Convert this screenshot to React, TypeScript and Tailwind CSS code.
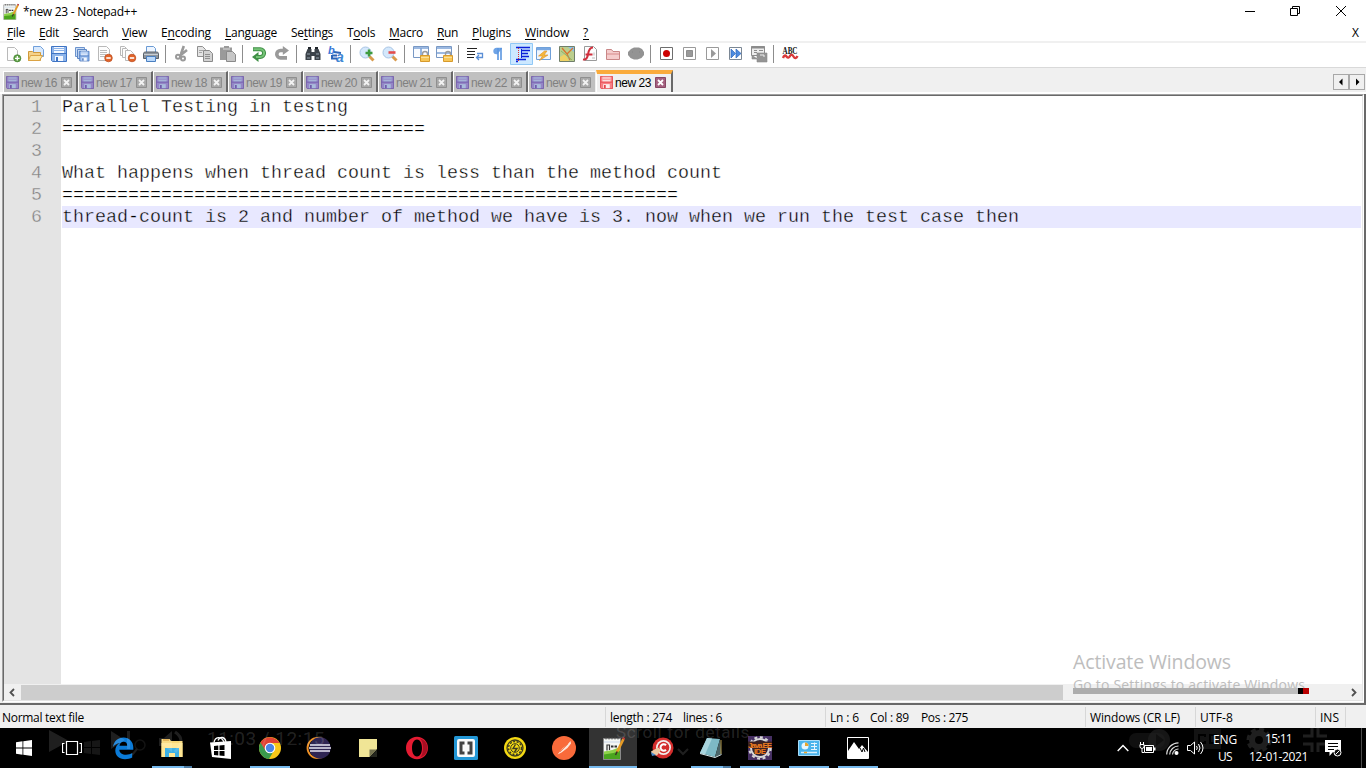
import { useLayoutEffect, useRef, type ReactNode } from "react";

const UI = "font-['Open_Sans','Noto_Sans',sans-serif]";

/* Text whose tracking is adjusted so that it fills a given width. */
function Fit({ w, className = "", children }: { w: number; className?: string; children: ReactNode }) {
  const ref = useRef<HTMLSpanElement>(null);
  useLayoutEffect(() => {
    const el = ref.current;
    if (!el) return;
    el.style.letterSpacing = "0px";
    const n = (el.textContent || "").length;
    const natural = el.getBoundingClientRect().width;
    el.style.letterSpacing = `${(w - natural) / n}px`;
  }, [w]);
  return (
    <span ref={ref} className={`inline-block whitespace-pre ${className}`}>
      {children}
    </span>
  );
}

/* ---------- toolbar icons ---------- */
function Ic({ children }: { children: ReactNode }) {
  return (
    <svg width="16" height="16" viewBox="0 0 16 16" className="mr-[7px] block shrink-0 overflow-visible">
      {children}
    </svg>
  );
}
const Sep = () => <div className="-ml-px mr-2 h-[18px] w-px shrink-0 bg-[#8d8d8d]" />;

const Page = ({ x = 0, y = 0, w = 10, h = 12, s = "#b9b9b9", f = "#fdfdfd" }) => (
  <path d={`M${x + 0.5} ${y + 0.5}h${w - 3}l3 3v${h - 3}h${-w}z`} fill={f} stroke={s} />
);
const Floppy = ({ c = "#3f74c4", l = "#8db4ea", p = "#f4f8ff" }) => (
  <g>
    <path d="M.5.5h15v15H1.5l-1-1z" fill={l} stroke={c} />
    <path d="M3 1h10v6H3z" fill={p} />
    <path d="M3 2.5h10M3 4.5h10" stroke={l} />
    <path d="M1 7.5h14" stroke={c} />
    <path d="M4 10h8v5H4z" fill={p} />
    <path d="M5 11h2v4H5z" fill={c} />
  </g>
);
const Minus = ({ x = 8, y = 8 }) => (
  <g>
    <circle cx={x + 4} cy={y + 4} r="3.8" fill="#e2642a" stroke="#b8481a" strokeWidth=".7" />
    <path d={`M${x + 1.8} ${y + 4}h4.4`} stroke="#fff" strokeWidth="1.6" />
  </g>
);
const Lock = () => (
  <g>
    <path d="M9.5 10V8a2.5 2.5 0 015 0v2" fill="none" stroke="#9b9b9b" strokeWidth="1.4" />
    <path d="M7.5 9.5h9v6h-9z" fill="#f7c657" stroke="#d79a2c" />
    <path d="M8 11.5h8" stroke="#fbe09a" />
  </g>
);

function Toolbar() {
  return (
    <div className="flex h-[24px] items-center pb-[2px] pl-[5px]">
      <Ic><Page x={2} y={1} w={10} h={13} /><circle cx="12.3" cy="12.3" r="3.6" fill="#5d9f43" stroke="#3b7a2a" strokeWidth=".6" /><path d="M10 12.3h4.6M12.3 10v4.6" stroke="#fff" strokeWidth="1.3" /></Ic>
      <Ic><path d="M5.500.500h7l3 3v7h-10z" fill="#d9e9fc" stroke="#6f9fdb" /><path d="M.5 14.5v-9h4l1 1h7v8z" fill="#f5d28a" stroke="#d09a3a" /><path d="M.5 14.5l2-5h12l-3 5z" fill="#fbe6a8" stroke="#dba344" /></Ic>
      <Ic><Floppy /></Ic>
      <Ic><path d="M1.5 1.5h9v9h-9z" fill="#c9dcf5" stroke="#6c93cd" /><path d="M3.5 3.5h9v9h-9z" fill="#c9dcf5" stroke="#5e88c6" /><g transform="translate(5 5) scale(.65)"><Floppy c="#3b69b4" /></g></Ic>
      <Ic><Page x={1} y={0} w={11} h={14} /><path d="M3 4.5h7M3 6.5h7M3 8.5h6M3 10.5h5" stroke="#bcbcbc" /><Minus x={7.5} /></Ic>
      <Ic><Page x={0} y={0} w={7} h={9} /><Page x={2} y={2} w={7} h={9} /><Page x={5} y={4} w={8} h={10} /><Minus /></Ic>
      <Ic><path d="M3.5 7V.5h7l2 2V7" fill="#edf5ff" stroke="#6b9bd4" /><path d="M.5 7.5c0-1 1-1.5 2-1.5h11c1 0 2 .5 2 1.5v5H.5z" fill="#8e959d" stroke="#59616a" /><path d="M1 8.5h14" stroke="#c8ced4" /><path d="M3.5 10.5h9v5h-9z" fill="#b9d8fb" stroke="#4a7fc0" /></Ic>
      <Sep />
      <Ic><path d="M9.8 0L7 8M13 4L5.500 10" stroke="#9a9a9a" strokeWidth="2.600" /><circle cx="4" cy="10.800" r="2" fill="none" stroke="#9a9a9a" strokeWidth="2" /><circle cx="9" cy="12.600" r="2" fill="none" stroke="#9a9a9a" strokeWidth="2" /></Ic>
      <Ic><Page x={0} y={0} w={8} h={10} s="#8f8f8f" f="#e4e4e4" /><path d="M2 4.5h4M2 6.5h3" stroke="#a5a5a5" /><Page x={6} y={4} w={9} h={11} s="#8a8a8a" f="#d2d2d2" /><path d="M8 8.5h5M8 10.5h5M8 12.5h5" stroke="#8f8f8f" /></Ic>
      <Ic><path d="M0 1.5h4V0h5v1.5h3V14H0z" fill="#9a9a9a" /><path d="M3 3h7" stroke="#dcdcdc" /><Page x={6} y={5} w={9} h={10} s="#8a8a8a" f="#c6c6c6" /></Ic>
      <Sep />
      <Ic><path d="M2 3.2h7.2a3.6 3.6 0 010 7.8H6" fill="none" stroke="#3f8f45" strokeWidth="4" /><path d="M7.5 6v10L1 11z" fill="#3f8f45" /><path d="M2.5 3.2h6.7a3.6 3.6 0 010 7.8H5" fill="none" stroke="#74c276" strokeWidth="2" /></Ic>
      <Ic><path d="M10 4.500H6.500a3.600 3.600 0 000 7.400H13" fill="none" stroke="#9a9a9a" strokeWidth="3.600" /><path d="M8.800 0v9L15 4.500z" fill="#9a9a9a" /></Ic>
      <Sep />
      <Ic><path d="M2.500 3h4v3h3V3h4l2 5v6h-6v-4h-3v4h-6V8z" fill="#3b4249" /><path d="M3 2h3M10 2h3" stroke="#20252a" strokeWidth="2" /><path d="M2 8h3M11 8h3M2 12h3M11 12h3" stroke="#98a4af" strokeWidth="1.200" /></Ic>
      <Ic><text x="0" y="8" className="font-['Liberation_Sans',sans-serif] text-[11px] font-bold italic" fill="#3a78d8">b</text><text x="8" y="16" className="font-['Liberation_Sans',sans-serif] text-[14px] font-bold italic" fill="#3f87d4">a</text><path d="M6 6l7 1M4 9.500h5M4 9v3.500h5" fill="none" stroke="#2d66b8" strokeWidth="2" /></Ic>
      <Sep />
      <Ic><path d="M9 9l5.500 5.500" stroke="#d99b4d" strokeWidth="3" /><circle cx="6.500" cy="6.500" r="5.500" fill="#d4e8fc" stroke="#a8c4e4" /><path d="M6.500 7h7M10 3.500v7" stroke="#3e9b3e" strokeWidth="2.400" /></Ic>
      <Ic><path d="M9 9l5.500 5.500" stroke="#d99b4d" strokeWidth="3" /><circle cx="6.500" cy="6.500" r="5.500" fill="#d4e8fc" stroke="#a8c4e4" /><path d="M6.500 6.500h7" stroke="#e34d4d" strokeWidth="2.600" /></Ic>
      <Sep />
      <Ic><path d="M.5.5h15v11H.5z" fill="#fafcff" stroke="#7898c4" /><path d="M1 2h14M8 2v9" stroke="#7ea3d8" strokeWidth="1.6" /><Lock /></Ic>
      <Ic><path d="M.5.5h15v11H.5z" fill="#fafcff" stroke="#7898c4" /><path d="M1 2h14M1 7h14" stroke="#7ea3d8" strokeWidth="1.6" /><Lock /></Ic>
      <Sep />
      <Ic><path d="M0 2.500h10M0 5.500h8M0 8.500h8M0 11.500h7" stroke="#222" /><path d="M10 7.500h5.500v4H10M12 9l-2.500 2.500L12 14" fill="none" stroke="#5b8fd6" strokeWidth="1.300" /></Ic>
      <Ic><path d="M12 2.500H6.500a2.500 2.500 0 000 5H8" fill="#6ea3e6" stroke="#6ea3e6" strokeWidth="1.400" /><path d="M8 2v12M11 2v12" stroke="#5b96e0" strokeWidth="1.600" /></Ic>
      <svg width="23" height="22" viewBox="0 0 23 22" className="-ml-[3px] mr-[4px] block shrink-0">
        <path d="M.5.5h22v21H.5z" fill="#cce8ff" stroke="#90c8f6" />
        <path d="M6 4.500h14M12 7.500h8M12 10.500h6M12 13.500h7M6 16.500h10M6 18.500h2" stroke="#0b1fd8" strokeWidth="1.300" />
        <path d="M11.500 6v9" stroke="#0b1fd8" />
        <path d="M8.500 5v13" stroke="#e03030" strokeDasharray="1 1" />
      </svg>
      <div className="-ml-px flex items-center">
        <Ic><path d="M.5 1.500h14v12H.5z" fill="#eef5fe" stroke="#6f9fd8" /><path d="M1 3h13" stroke="#79a8e2" strokeWidth="2.400" /><path d="M8.500 5L2.500 10h4l-3 4.500L12 9H8l3-4z" fill="#f6b73c" stroke="#d8902a" strokeWidth=".6" /></Ic>
        <Ic><path d="M.5.500h15v15H.500z" fill="#bccf8e" stroke="#6f7f6a" /><path d="M1 11l5-3 4 7H1z" fill="#f0d264" /><path d="M9 1h6v5z" fill="#8ec0e8" /><path d="M3 2l5 6 6-6M8 8l3 6" fill="none" stroke="#d9742d" strokeWidth="1.300" /><path d="M2 5l5 4 6 5" fill="none" stroke="#8fb56a" /></Ic>
        <Ic><Page x={2} y={0} w={12} h={14} s="#9a9a9a" /><path d="M11 1.500c-4 0-4.500 4-5 7s-2 5.500-5 5M3.500 8.500h7" fill="none" stroke="#d02f3c" strokeWidth="2" /><path d="M12 6.500v3M10 12h3" stroke="#bbb" /></Ic>
        <Ic><path d="M1.500 13.500v-10h5l1.500 2h6.500v8z" fill="#f5cccc" stroke="#c98686" /><path d="M2 8h12" stroke="#e3a3a3" strokeWidth="1.600" /></Ic>
        <Ic><path d="M3 3l3-1.500h5L14 3l2 3v3l-2.500 3-4 1.500H6L2.500 12 0 9V6z" fill="#939393" /><path d="M4 6h1M11 6h1" stroke="#858585" /></Ic>
        <Sep />
        <Ic><path d="M1.500 1.500h12v12h-12z" fill="#fff" stroke="#6e6e6e" /><circle cx="7.500" cy="7.500" r="3.500" fill="#cc0000" /></Ic>
        <Ic><path d="M1.500 1.500h12v12h-12z" fill="#fff" stroke="#9a9a9a" /><path d="M4.500 4.500h6v6h-6z" fill="#999" stroke="#8d8d8d" /></Ic>
        <Ic><path d="M1.500 1.500h12v12h-12z" fill="#fff" stroke="#9a9a9a" /><path d="M6 3l5 4.500L6 12z" fill="#9a9a9a" /></Ic>
        <Ic><path d="M1.500 1.500h12v12h-12z" fill="#fff" stroke="#7b8794" /><path d="M3 3l4.500 4.500L3 12zM8 3l5 4.500L8 12z" fill="#4c8be0" stroke="#2f66b8" strokeWidth=".7" /></Ic>
        <Ic><path d="M.500.500h13v9H.500z" fill="#ededed" stroke="#8c8c8c" /><path d="M0 1.500h14" stroke="#8c8c8c" strokeWidth="2" /><path d="M3 4.500h3M8 4.500h4M3 6.500h3M3 9.500h4" stroke="#8c8c8c" /><path d="M1 9v4h6M6 7h10v9H6z" fill="#949494" stroke="#8c8c8c" strokeWidth=".6" /><path d="M9 9h4v2" stroke="#eee" fill="none" /></Ic>
        <Sep />
        <Ic><text x=".5" y="7.500" textLength="15" lengthAdjust="spacingAndGlyphs" className="font-['Liberation_Serif',serif] text-[9.5px] font-bold" fill="#111">ABC</text><path d="M1 12q1.500-4 3.500-1.500t3.500-.500 3.500.500 4-.500" fill="none" stroke="#d93a3a" strokeWidth="2.400" /></Ic>
      </div>
    </div>
  );
}

/* ---------- tabs ---------- */
function Tab({ label, active = false, narrow = false }: { label: string; active?: boolean; narrow?: boolean }) {
  return (
    <div
      className={`flex shrink-0 ${
        active
          ? "ml-px mt-px h-[23px] w-[77px] border-t-4 border-r-2 border-l border-t-[#faab3c] border-r-[#696969] border-l-white bg-[#f0f0f0] pl-[3px] pt-[2px]"
          : `mt-[2px] h-[21px] border-t border-l border-white bg-[#c0c0c0] pl-[2px] pt-[4px] ${narrow ? "w-[67px]" : "w-[75px] border-r-2 border-r-[#696969]"}`
      }`}
    >
      <svg width="13" height="13" viewBox="0 0 16 16" className="mr-[2px] block shrink-0">
        <Floppy c={active ? "#e23b43" : "#6d55a8"} l={active ? "#f77f84" : "#9486c6"} p={active ? "#fdeeee" : "#a9bcdc"} />
      </svg>
      <Fit w={narrow ? 30 : 36} className={`font-['Liberation_Sans',sans-serif] text-[12px] leading-[14px] ${active ? "text-black" : "text-[#808080]"}`}>
        {label}
      </Fit>
      <svg width="11" height="11" viewBox="0 0 11 11" className="ml-[4px] mt-px block shrink-0">
        <path d="M.5.5h10v10H.5z" fill={active ? "#a4607f" : "#a9a9a9"} stroke={active ? "#874764" : "#8f8f8f"} />
        <path d="M3 3l5 5M8 3L3 8" stroke={active ? "#fff" : "#f2f2f2"} strokeWidth="1.800" />
      </svg>
    </div>
  );
}

const NppIcon = ({ size }: { size: number }) => (
  <svg width={size} height={size} viewBox="0 0 24 24" className="block">
    <path d="M2.500 2.500h17v21h-17z" fill="#f5f7f4" stroke="#8a8a8a" />
    <path d="M3 5h16v2H3z" fill="#dfe6ee" />
    <path d="M3 15.500q8-.500 16-4.500v12H3z" fill="#8ed24a" />
    <path d="M3 18.500q8-.500 16-3.500v8H3z" fill="#4aa51e" />
    <path d="M5 1.500v2M8 1.500v2M11 1.500v2M14 1.500v2M17 1.500v2" stroke="#555" />
    <path d="M6 8.500v6M6 9h2.500v5" stroke="#333" fill="none" strokeWidth="1.200" />
    <path d="M10 10.500h2.500M13.500 10.500H16" stroke="#333" strokeWidth="1.800" />
    <path d="M22.500 3L16 16" stroke="#e59a25" strokeWidth="2.600" />
    <path d="M23.200 1.500l-.8 1.700" stroke="#b8383d" strokeWidth="2.600" />
    <path d="M16.200 15.500L14.500 19" stroke="#3b3024" strokeWidth="1.500" />
  </svg>
);

const menus: [string, string, string, number][] = [
  ["", "F", "ile", 18], ["", "E", "dit", 20], ["", "S", "earch", 35], ["", "V", "iew", 25],
  ["E", "n", "coding", 50], ["", "L", "anguage", 52], ["Se", "t", "tings", 42], ["T", "o", "ols", 28],
  ["", "M", "acro", 34], ["", "R", "un", 21], ["", "P", "lugins", 39], ["", "W", "indow", 44], ["", "?", "", 6],
];

const lines = [
  "Parallel Testing in testng",
  "=================================",
  "",
  "What happens when thread count is less than the method count",
  "========================================================",
  "thread-count is 2 and number of method we have is 3. now when we run the test case then",
];

/* ---------- taskbar ---------- */
function Slot({ children, run = 0, active = false }: { children: ReactNode; run?: number; active?: boolean }) {
  return (
    <div className={`mr-px flex h-[40px] w-[48px] shrink-0 flex-col items-center ${active ? "bg-[#333333]" : ""}`}>
      <div className="flex h-[38px] items-center pt-[2px]">{children}</div>
      {active && <div className="h-[2px] w-[48px] bg-[#76b9ed]" />}
      {run > 0 && (
        <div className="flex h-[2px] w-[40px]">
          <div className="flex-1 bg-[#76b9ed]" />
          {run > 1 && <div className="w-[8px] bg-[#4c7ba3]" />}
        </div>
      )}
    </div>
  );
}
const Big = ({ children }: { children: ReactNode }) => (
  <svg width="24" height="24" viewBox="0 0 24 24" className="block overflow-visible">{children}</svg>
);

function Taskbar() {
  return (
    <div className="relative flex h-[40px] bg-black">
      <div className="flex w-[48px] items-center justify-center">
        <svg width="16" height="16" viewBox="0 0 16 16"><path d="M0 2.200L6.500 1.300V7.600H0zM7.300 1.200L16 0v7.600H7.300zM0 8.400h6.500v6.300L0 13.800zM7.300 8.400H16V16l-8.700-1.200z" fill="#fff" /></svg>
      </div>
      <div className="mr-[3px] flex w-[48px] items-center justify-center">
        <svg width="20" height="14" viewBox="0 0 20 14"><path d="M4.500.5h11v13h-11zM2.500 2.500h-2v9h2M17.500 2.500h2v9h-2" fill="none" stroke="#fff" strokeWidth="1.200" /></svg>
      </div>
      <Slot><Big><path fillRule="evenodd" d="M2 11C3 5 7 1.500 12.500 1.500c6 0 9.800 4.500 9.800 10v2.300H8.300c.3 3.200 3 5 6.700 5 2.500 0 4.500-.7 6.200-1.700v4.400c-2 1.100-4.400 1.700-7.200 1.700-6 0-9.700-3.500-9.700-8.700 0-3.300 1.700-6 4.700-7.500C5.500 7.500 3.500 9 2 11zM8.500 9.800h7.700c0-2.600-1.200-4-3.600-4-2.200 0-3.700 1.500-4.100 4z" fill="#0b7bd8" /></Big></Slot>
      <Slot run={2}><Big><path d="M1.500 3h8l1.500 2h11.500v16h-21z" fill="#f8d775" /><path d="M1.500 7h21v14h-21z" fill="#ffe694" /><path d="M3 4h6" stroke="#d79b32" strokeWidth="1.500" /><path d="M5 12h14v9h-4v-4H9v4H5z" fill="#3db1e6" /></Big></Slot>
      <Slot><Big><path d="M1 7.500L22 6v18L3 22z" transform="translate(0 -1)" fill="#fff" /><path d="M5 6.500c1-6 7-7 10-.5M9 4.500c2-4.500 7-4 8 1.500" fill="none" stroke="#fff" strokeWidth="1.300" /><path d="M5 10l4.300-.4v4.400H5zM10.500 9.500l5-.5v5h-5zM5 15h4.300v4.400L5 19zM10.500 15h5v5l-5-.5z" fill="#000" /></Big></Slot>
      <Slot run={1}><Big><circle cx="12" cy="12" r="11" fill="#f8c719" /><path d="M2.500 6.500A11 11 0 0011 23l5-8.500-4-2.500z" fill="#3a9a4c" /><path d="M2.500 6.500l5 8 5-7.500h9A11 11 0 002.500 6.500z" fill="#df4134" /><circle cx="12" cy="12" r="5.300" fill="#fff" /><circle cx="12" cy="12" r="4.200" fill="#4a85e8" /></Big></Slot>
      <Slot><Big><circle cx="10.500" cy="12" r="10" fill="none" stroke="#f09226" strokeWidth="1.800" /><circle cx="13" cy="12" r="10.700" fill="#2f2553" /><path d="M3 9h20M2 12h22M3 15h20" stroke="#e9e6f4" strokeWidth="1.500" /></Big></Slot>
      <Slot><Big><path d="M3 3h18v10l-7.500 8H3z" fill="#f0e596" /><path d="M13.500 13.500H21L13.500 21z" fill="#757350" /><path d="M21 14v7h-7z" fill="#24261e" /></Big></Slot>
      <Slot><Big><path fillRule="evenodd" d="M12 .8c6.300 0 11 5 11 11.200s-4.700 11.200-11 11.200S1 18.200 1 12 5.700.8 12 .8zM12 3.500C8.500 3.500 7 8 7 12s1.500 8.500 5 8.500 5-4.500 5-8.500-1.500-8.500-5-8.500z" fill="#e51b32" /><path d="M15 2.500c10 3 10 16 0 19 4-4 4-15 0-19z" fill="#a70e22" /></Big></Slot>
      <Slot><Big><rect width="24" height="24" rx="1.500" fill="#2397d6" /><rect x="3" y="3" width="18" height="18" rx="2" fill="#fafafa" /><path d="M10.500 7H7v10h3.500M13.500 7H17v10h-3.500" fill="none" stroke="#424242" strokeWidth="3" /></Big></Slot>
      <Slot><Big><circle cx="12" cy="12" r="11" fill="#f4d913" /><circle cx="12" cy="12" r="8" fill="none" stroke="#3c3b1f" strokeWidth="1.300" /><circle cx="12" cy="12" r="6.500" fill="none" stroke="#3c3b1f" strokeWidth="1.500" strokeDasharray="2 1.500" /><circle cx="12" cy="12" r="4.300" fill="none" stroke="#3c3b1f" strokeWidth="1" /><path d="M12.500 8.500l-2.500 4h4l-2.500 3.500" fill="none" stroke="#3c3b1f" strokeWidth="1.400" /></Big></Slot>
      <Slot><Big><circle cx="12" cy="12" r="12" fill="#f96a3a" /><path d="M5.500 18.500l5-6 5-4L18.500 5l.5 2.500-3.500 4.500-6 4.500z" fill="#fde5da" /><path d="M8 16l8-8" stroke="#f28a63" /></Big></Slot>
      <Slot active><NppIcon size={24} /></Slot>
      <Slot><Big><circle cx="13" cy="12" r="10.500" fill="#d32d2c" /><circle cx="13.500" cy="11.500" r="7.500" fill="#f0efed" /><circle cx="13.500" cy="11.500" r="5.800" fill="#d32d2c" /><path d="M16 9.300a3.200 3.200 0 100 4.500" fill="none" stroke="#fff" strokeWidth="2" /><path d="M1 15.500l7-4 3 2.500-4 5.500-5-1z" fill="#eec9a2" /><path d="M1 16l5 3-4 1z" fill="#4b8ac9" /></Big></Slot>
      <Slot run={2}><Big><path d="M8 2l13 1-5 18-15-4z" fill="#7db9c6" /><path d="M8 2l5 .4L6 18.500 1 17z" fill="#a9d5de" /><path d="M21 3l1.500 15-6.500 3z" fill="#4b6569" /><path d="M1 17.500l15 4 6.500-3" fill="none" stroke="#d6e7ea" /><path d="M22 4v14" stroke="#b59a4c" /></Big></Slot>
      <Slot run={1}><Big><path d="M0 0h24v24H0z" fill="#463063" /><circle cx="12" cy="12" r="9" fill="#2d1f33" stroke="#d8d8d8" strokeWidth="2" /><circle cx="12" cy="12" r="10.800" fill="none" stroke="#d8d8d8" strokeWidth="2" strokeDasharray="3 2.600" /><path d="M0 5.500h24v6.500H0zM6 12h12v6H6z" fill="#3c2020" /><text x="0" y="11.500" textLength="24" className="font-['Liberation_Sans',sans-serif] text-[8px] font-bold" fill="#ee7d21">Java EE</text><text x="6" y="18" textLength="12" className="font-['Liberation_Sans',sans-serif] text-[8px] font-bold" fill="#ee7d21">IDE</text></Big></Slot>
      <Slot run={1}><Big><path d="M1.500 4.500h21v15h-21z" fill="#4bb4ec" stroke="#a8dcf8" /><circle cx="8" cy="10" r="3.500" fill="#e7f6fe" /><path d="M8 10V6.500A3.500 3.500 0 0111.500 10z" fill="#e9a52c" /><path d="M14 7.500h6M14 10.500h6M14 13.500h6M17.500 6.500v7" stroke="#e7f6fe" /><path d="M4 16.500h16" stroke="#d6effc" strokeWidth="1.500" /><path d="M7 16.500h3" stroke="#e9a52c" strokeWidth="1.500" /></Big></Slot>
      <Slot run={1}><Big><path d="M1.500 1.500h21v21h-21z" fill="#000" stroke="#fff" /><path d="M2 15l6-9 5 7 3-4 6 7v6H2z" fill="#fff" /><path d="M14 12l2 4 1.500-4 1.500 4" stroke="#000" fill="none" /></Big></Slot>

      {/* system tray */}
      <div className={`ml-auto flex items-center text-white ${UI}`}>
        <svg width="12" height="8" viewBox="0 0 12 8" className="mr-[10px]"><path d="M.7 7L6 1.500 11.300 7" fill="none" stroke="#fff" strokeWidth="1.400" /></svg>
        <svg width="17" height="12" viewBox="0 0 17 12" className="mr-[10px]"><path d="M1 2.500h4v2a2 2 0 01-4 0zM1.500 0v2M4.500 0v2M3 7v3.500h2" fill="none" stroke="#fff" /><path d="M5.500 3.500h9v7h-9z" fill="none" stroke="#fff" /><path d="M7 5h6v4H7zM15 5.500h1.500v3H15z" fill="#fff" /></svg>
        <svg width="13" height="13" viewBox="0 0 13 13" className="mr-[8px]"><path d="M.7 12.500A12 12 0 0112.500.8M3.700 12.500A9 9 0 0112.500 4M6.500 12.500A6 6 0 0112.500 7" fill="none" stroke="#ddd" strokeWidth="1.200" /><circle cx="10.500" cy="11" r="2" fill="#fff" /></svg>
        <svg width="18" height="14" viewBox="0 0 18 14" className="mr-[8px]"><path d="M.5 4.500h3l4-3.500v12l-4-3.500h-3z" fill="none" stroke="#fff" /><path d="M9.500 5q1.500 2 0 4M11.500 3q3 4 0 8M13.500 1q5 6 0 12" fill="none" stroke="#fff" /></svg>
        <div className="mr-[12px] flex w-[24px] flex-col items-center text-[12px] leading-[17px]">
          <Fit w={24}>ENG</Fit>
          <Fit w={14}>US</Fit>
        </div>
        <div className="mr-[17px] flex w-[59px] flex-col items-center text-[12px] leading-[18px]">
          <Fit w={27}>15:11</Fit>
          <Fit w={59}>12-01-2021</Fit>
        </div>
        <svg width="18" height="17" viewBox="0 0 18 17" className="mr-[18px]"><path d="M0 0h16v12H8l-3.500 4v-4H0z" fill="#fff" /><path d="M3 3.500h10M3 6.500h10M3 9.500h6" stroke="#000" strokeWidth="1.200" /><circle cx="12.500" cy="12.500" r="3.500" fill="#111" stroke="#fff" /><path d="M10.500 14.500l4-4" stroke="#fff" /></svg>
        <div className="mr-[4px] h-[40px] w-px bg-[#4a4a4a]" />
      </div>

      {/* faded player controls over the bar */}
      <svg width="1366" height="40" viewBox="0 0 1366 40" className="pointer-events-none absolute left-0 top-0 opacity-[0.12]">
        <path d="M49 2v22l20-11zM111 3v18l14-9zM127 3h3v18h-3zM159 10v8h5l8 6V3l-8 7z" fill="#fff" />
        <path d="M84 14l7-1v6h-7zM92 13l8-1v7h-8zM84 20h7v6l-7-1zM92 20h8v7l-8-1z" fill="#fff" opacity=".7" />
        <path d="M175 4q12 8 0 20" fill="none" stroke="#fff" strokeWidth="3" />
        <circle cx="140" cy="17" r="5" fill="none" stroke="#fff" strokeWidth="1.500" opacity=".6" />
        <path d="M137 21l-5 6M678 21l5 5 5-5" fill="none" stroke="#fff" strokeWidth="2" />
        <rect x="1129" y="5" width="36" height="15" rx="7" fill="#fff" opacity=".5" />
        <path fillRule="evenodd" d="M1159 1a11 11 0 110 22 11 11 0 010-22zM1156 6v12l8-6z" fill="#fff" opacity=".7" />
        <path fillRule="evenodd" d="M1194 1h27v20h-27zM1198 6v10h8v-3h-2v1h-4V8h4v1h2V6zM1209 6v10h8v-3h-2v1h-4V8h4v1h2V6z" fill="#fff" opacity=".6" />
        <circle cx="1259" cy="12" r="7" fill="none" stroke="#fff" strokeWidth="6" />
        <circle cx="1259" cy="12" r="11" fill="none" stroke="#fff" strokeWidth="3" strokeDasharray="5 3.600" />
        <path d="M1303 8h9V0M1327 8h-9V0M1303 16h9v8M1327 16h-9v8" fill="none" stroke="#fff" strokeWidth="3" />
      </svg>
      <div className="pointer-events-none absolute left-[207px] top-0 font-[Roboto,sans-serif] text-[19px] leading-[22px] text-white/15"><Fit w={118}>11:03 / 12:15</Fit></div>
      <div className="pointer-events-none absolute left-[616px] top-[-6px] h-[20px] font-[Roboto,sans-serif] text-[17px] leading-[20px] text-white/15"><Fit w={134}>Scroll for details</Fit></div>
    </div>
  );
}

function StatusCell({ width, children }: { width: string; children?: ReactNode }) {
  return <div className={`flex h-[20px] items-center border-r border-[#d7d7d7] pl-[4px] pt-px ${width}`}>{children}</div>;
}

export default function App() {
  return (
    <div className={`relative flex h-[768px] w-[1366px] flex-col overflow-hidden bg-white text-[12px] text-black ${UI}`}>
      {/* title bar */}
      <div className="flex h-[22px] items-center pl-[2px]">
        <NppIcon size={17} />
        <Fit w={114} className="ml-[4px] pt-[2px] leading-[16px]">*new 23 - Notepad++</Fit>
        <svg width="102" height="12" viewBox="0 0 102 12" className="ml-auto mr-[19px]">
          <path d="M0 6.500h10" stroke="#000" />
          <path d="M45.500 3.500h7v7h-7zM47.500 3V1.500h7v7H53" fill="none" stroke="#000" />
          <path d="M91 1l10 10M101 1L91 11" stroke="#000" />
        </svg>
      </div>

      {/* menu bar */}
      <div className="flex h-[19px] items-center gap-[14px] pl-[7px] pt-[2px] leading-[18px]">
        {menus.map(([a, k, b, w]) => (
          <span key={a + k + b} className="flex shrink-0">
            <Fit w={w}>{a}<span className="underline underline-offset-2">{k}</span>{b}</Fit>
          </span>
        ))}
        <span className="ml-auto mr-[7px]">X</span>
      </div>
      <div className="h-[2px] bg-[#f0f0f0]" />

      <Toolbar />

      {/* tab strip */}
      <div className="flex h-[25px] border-t border-[#d9d9d9] bg-[#f0f0f0] pl-[3px] pt-px">
        {[16, 17, 18, 19, 20, 21, 22].map((n) => <Tab key={n} label={`new ${n}`} />)}
        <Tab label="new 9" narrow />
        <Tab label="new 23" active />
        <div className="ml-auto mr-[1px] mt-[5px] flex h-[16px]">
          {["M4.500 3.500v7L1 7z", "M2 3.500v7L5.500 7z"].map((d) => (
            <div key={d} className="flex w-[16px] items-center justify-center border border-[#a8a8a8] bg-[#f0f0f0]">
              <svg width="6" height="14" viewBox="0 0 6 14"><path d={d} fill="#000" /></svg>
            </div>
          ))}
        </div>
      </div>
      <div className="h-[2px] bg-white" />

      {/* editor */}
      <div className="h-[611px] border-r-2 border-b-2 border-[#696969] bg-[#f0f0f0] pl-[2px]">
        <div className="h-[608px] border border-t-[#a0a0a0] border-r-white border-b-white border-l-[#a0a0a0]">
          <div className="flex h-[606px] flex-col border border-t-[#696969] border-r-[#e3e3e3] border-b-[#e3e3e3] border-l-[#696969]">
            <div className="flex h-[588px] bg-white pr-px">
              <div className="w-[57px] shrink-0 bg-[#e4e4e4] pr-[19px] text-right font-['Liberation_Mono',monospace] text-[18.33px] leading-[24px] text-[#808080] [-webkit-text-stroke:0.35px_#e4e4e4]">
                {lines.map((_, i) => <div key={i} className="h-[22px]">{i + 1}</div>)}
              </div>
              <div className="ml-px flex-1 font-['Liberation_Mono',monospace] text-[18.33px] leading-[24px] text-black">
                {lines.map((t, i) => (
                  <div key={i} className={`h-[22px] whitespace-pre ${i === 5 ? "bg-[#e8e8ff] [-webkit-text-stroke:0.35px_#e8e8ff]" : "[-webkit-text-stroke:0.35px_white]"}`}>{t}</div>
                ))}
              </div>
            </div>
            <div className="flex h-[16px] items-center bg-[#f0f0f0]">
              <svg width="17" height="16" viewBox="0 0 17 16"><path d="M10 5L6.500 8.500 10 12" fill="none" stroke="#505050" strokeWidth="1.800" /></svg>
              <div className="h-[15px] w-[1042px] bg-[#cdcdcd]" />
              <svg width="17" height="16" viewBox="0 0 17 16" className="ml-auto"><path d="M7 5l3.500 3.500L7 12" fill="none" stroke="#505050" strokeWidth="1.800" /></svg>
            </div>
          </div>
        </div>
      </div>
      <div className="h-px bg-[#f0f0f0]" />

      {/* status bar */}
      <div className="flex h-[22px] items-center bg-[#f0f0f0]">
        <div className="flex h-[20px] w-[606px] items-center border-r border-[#d7d7d7] pl-[2px] pt-px"><Fit w={82}>Normal text file</Fit></div>
        <StatusCell width="w-[220px]"><Fit w={62}>length : 274</Fit><Fit w={39} className="ml-[11px]">lines : 6</Fit></StatusCell>
        <StatusCell width="w-[260px]"><Fit w={29}>Ln : 6</Fit><Fit w={39} className="ml-[11px]">Col : 89</Fit><Fit w={47} className="ml-[12px]">Pos : 275</Fit></StatusCell>
        <StatusCell width="w-[110px]"><Fit w={90}>Windows (CR LF)</Fit></StatusCell>
        <StatusCell width="w-[120px]"><Fit w={33}>UTF-8</Fit></StatusCell>
        <StatusCell width="w-[30px]"><Fit w={19}>INS</Fit></StatusCell>
      </div>

      <Taskbar />

      {/* activation watermark */}
      <div className="pointer-events-none absolute left-[1073px] top-[649px] h-[45px] w-[236px] text-[#bdbdbd]">
        <Fit w={158} className="block w-max text-[19.5px] leading-[26px]">Activate Windows</Fit>
        <Fit w={236} className="block w-max text-[14px] leading-[20px]">Go to Settings to activate Windows.</Fit>
        <div className="absolute bottom-0 left-0 flex h-[6px] w-[236px]">
          <div className="flex-1 bg-[#adadad]" />
          <div className="w-[28px] bg-[#bdbdbd]" />
          <div className="w-[5px] bg-black" />
          <div className="w-[6px] bg-[#b80000]" />
        </div>
      </div>
    </div>
  );
}
